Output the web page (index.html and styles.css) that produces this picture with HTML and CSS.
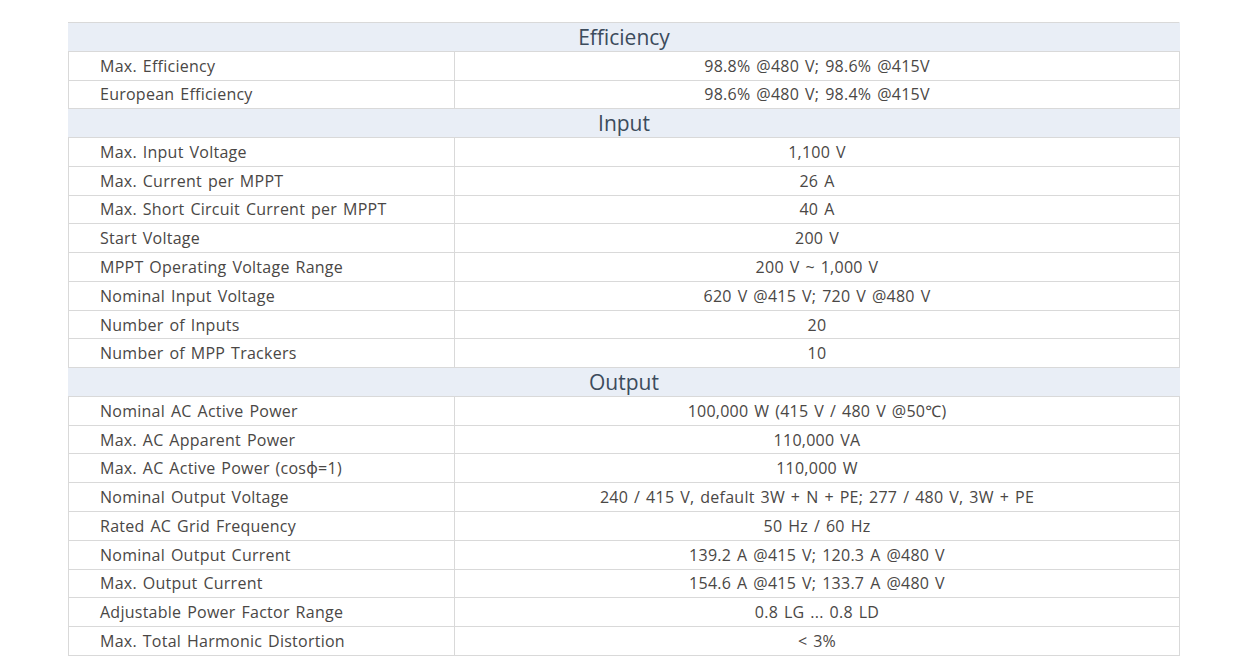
FILE: index.html
```html
<!DOCTYPE html>
<html>
<head>
<meta charset="utf-8">
<link rel="stylesheet" href="styles.css">
</head>
<body>
<div class="page">
<table class="spec">
  <colgroup><col class="c1"><col class="c2"></colgroup>
  <tr class="head"><th colspan="2">Efficiency</th></tr>
  <tr><td>Max. Efficiency</td><td>98.8% @480 V; 98.6% @415V</td></tr>
  <tr><td>European Efficiency</td><td>98.6% @480 V; 98.4% @415V</td></tr>
  <tr class="head"><th colspan="2">Input</th></tr>
  <tr><td>Max. Input Voltage</td><td>1,100 V</td></tr>
  <tr><td>Max. Current per MPPT</td><td>26 A</td></tr>
  <tr><td>Max. Short Circuit Current per MPPT</td><td>40 A</td></tr>
  <tr><td>Start Voltage</td><td>200 V</td></tr>
  <tr><td>MPPT Operating Voltage Range</td><td>200 V ~ 1,000 V</td></tr>
  <tr><td>Nominal Input Voltage</td><td>620 V @415 V; 720 V @480 V</td></tr>
  <tr><td>Number of Inputs</td><td>20</td></tr>
  <tr><td>Number of MPP Trackers</td><td>10</td></tr>
  <tr class="head"><th colspan="2">Output</th></tr>
  <tr><td>Nominal AC Active Power</td><td>100,000 W (415 V / 480 V @50℃)</td></tr>
  <tr><td>Max. AC Apparent Power</td><td>110,000 VA</td></tr>
  <tr><td>Max. AC Active Power (cosϕ=1)</td><td>110,000 W</td></tr>
  <tr><td>Nominal Output Voltage</td><td>240 / 415 V, default 3W + N + PE; 277 / 480 V, 3W + PE</td></tr>
  <tr><td>Rated AC Grid Frequency</td><td>50 Hz / 60 Hz</td></tr>
  <tr><td>Nominal Output Current</td><td>139.2 A @415 V; 120.3 A @480 V</td></tr>
  <tr><td>Max. Output Current</td><td>154.6 A @415 V; 133.7 A @480 V</td></tr>
  <tr><td>Adjustable Power Factor Range</td><td>0.8 LG ... 0.8 LD</td></tr>
  <tr><td>Max. Total Harmonic Distortion</td><td>&lt; 3%</td></tr>
</table>
</div>
</body>
</html>
```
FILE: styles.css
```css
html, body {
  margin: 0;
  padding: 0;
  background: #ffffff;
}
.page {
  padding: 22px 0 0 68px;
}
.spec {
  width: 1112px;
  border-collapse: collapse;
  font-family: "Open Sans", "Noto Sans", sans-serif;
  font-size: 16px;
  color: #4a4745;
  table-layout: fixed;
}
.spec .c1 {
  width: 386px;
}
.spec td, .spec th {
  border: 1px solid #d9d9d9;
  height: 27.77px;
  padding: 0;
  line-height: 20px;
}
.spec td {
  letter-spacing: 0.25px;
  word-spacing: 1.5px;
}
.spec td:first-child {
  padding-left: 31px;
  text-align: left;
}
.spec td + td {
  text-align: center;
}
.spec .head th {
  background: #e9eef6;
  color: #3c4b5c;
  font-weight: normal;
  font-size: 21px;
  border-left-color: #e9eef6;
  border-right-color: #e9eef6;
}
```
